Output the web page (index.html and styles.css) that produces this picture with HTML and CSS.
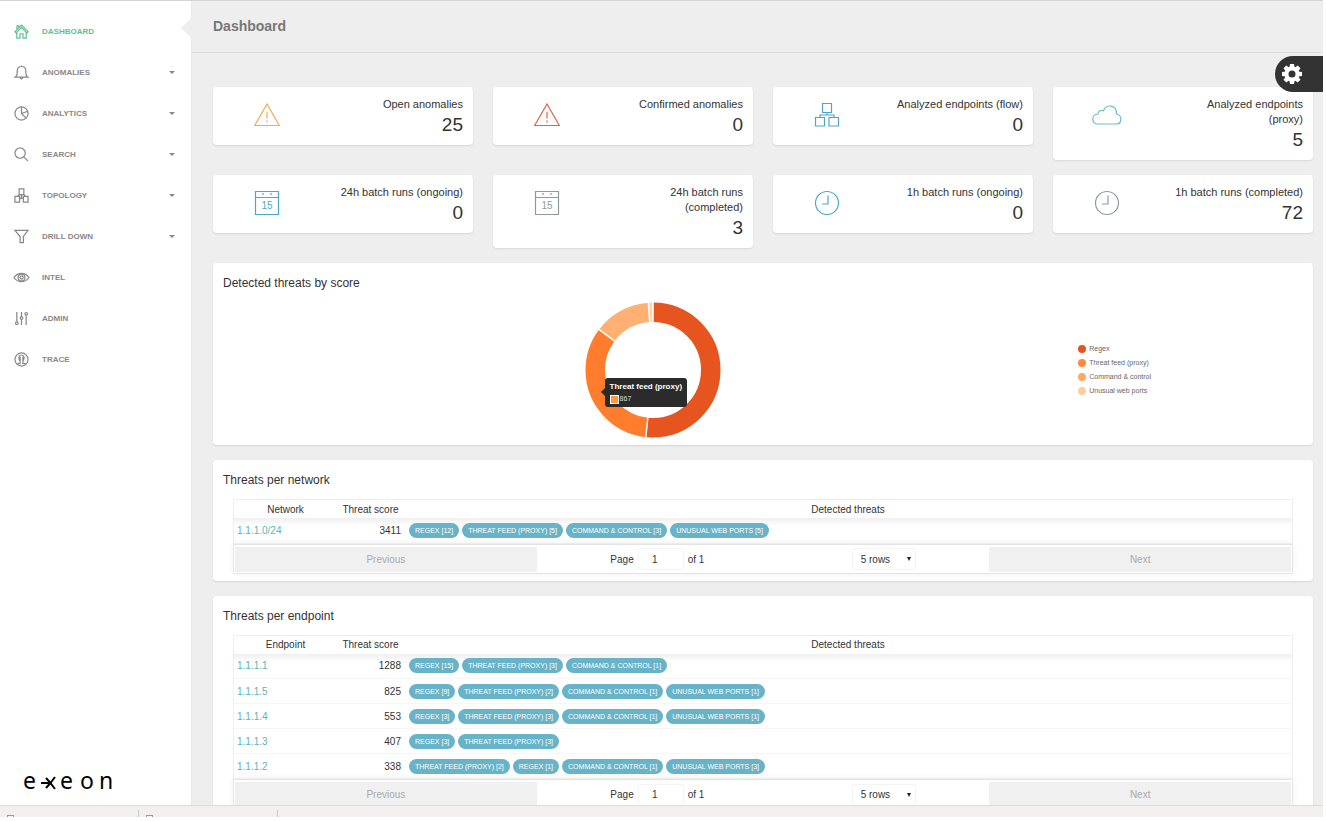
FILE: index.html
```html
<!DOCTYPE html>
<html lang="en">
<head>
    <meta charset="UTF-8">
    <meta name="viewport" content="width=device-width, initial-scale=1.0">
    <title>Dashboard</title>
    <link rel="stylesheet" href="styles.css">
</head>
<body>
    <div class="app">

        <!-- Sidebar -->
        <aside class="sidebar">
            <nav class="nav">
                <a class="nav-item active" href="#">
                    <svg class="nav-icon" viewBox="0 0 16 16"><path d="M1 8.2 8 1.2l7 7-1.2 1.2L8 3.7 2.2 9.4zM3 8.8V15h3.4v-4.6h3.2V15H13V8.8M3.2 5.8V2h2v2"/></svg>
                    <span>DASHBOARD</span>
                </a>
                <a class="nav-item" href="#">
                    <svg class="nav-icon" viewBox="0 0 16 16"><path d="M1.2 13c1.6-1 2.2-2.400 2.200-4.500V6.500C3.400 3.500 5.300 1.600 8 1.600s4.600 1.900 4.600 4.900v2c0 2.100.6 3.500 2.200 4.500zM6.600 13.200c0 2 2.800 2 2.800 0M8 .4v1.200"/></svg>
                    <span>ANOMALIES</span><i class="caret"></i>
                </a>
                <a class="nav-item" href="#">
                    <svg class="nav-icon" viewBox="0 0 16 16"><circle cx="8" cy="8" r="7"/><path d="M8 1v7l4.800 5M8 8l6.600-2.400"/></svg>
                    <span>ANALYTICS</span><i class="caret"></i>
                </a>
                <a class="nav-item" href="#">
                    <svg class="nav-icon" viewBox="0 0 16 16"><circle cx="6.500" cy="6.500" r="5.500"/><path d="M10.500 10.500 15 15"/></svg>
                    <span>SEARCH</span><i class="caret"></i>
                </a>
                <a class="nav-item" href="#">
                    <svg class="nav-icon" viewBox="0 0 16 16"><path d="M5.500 1h5v6h-5zM1 9h5v6H1zM10 9h5v6h-5zM8 7v4M3.500 9l2-2M12.500 9l-2-2M6 11h4"/></svg>
                    <span>TOPOLOGY</span><i class="caret"></i>
                </a>
                <a class="nav-item" href="#">
                    <svg class="nav-icon" viewBox="0 0 16 16"><path d="M1 1.500h14l-5 6.500v6.500H6.500V8z"/></svg>
                    <span>DRILL DOWN</span><i class="caret"></i>
                </a>
                <a class="nav-item" href="#">
                    <svg class="nav-icon" viewBox="0 0 16 16"><path d="M0 8c4-6 12-6 16 0-4 6-12 6-16 0z"/><circle cx="8" cy="8" r="3.700"/><circle cx="8" cy="8" r="1.700"/></svg>
                    <span>INTEL</span>
                </a>
                <a class="nav-item" href="#">
                    <svg class="nav-icon" viewBox="0 0 16 16"><path d="M3 1v10.500M8 1v5M8 9v6M13 4.500V15"/><circle cx="3" cy="13" r="1.400"/><circle cx="8" cy="7.500" r="1.400"/><circle cx="13" cy="3" r="1.400"/></svg>
                    <span>ADMIN</span>
                </a>
                <a class="nav-item" href="#">
                    <svg class="nav-icon" viewBox="0 0 16 16"><circle cx="8" cy="8" r="7"/><path d="M3.500 12.500h3V10C4.300 7 5 3.200 8 3.200S11.700 7 9.500 10v2.500h3M6.500 10V5M9.500 10V5"/></svg>
                    <span>TRACE</span>
                </a>
            </nav>
            <svg class="logo" viewBox="0 -8 92 34" role="img" aria-label="exeon">
                <g class="logo-text">
                    <text x="0" y="18">e</text>
                    <text x="37" y="18">e</text>
                    <text x="57" y="18">o</text>
                    <text x="76" y="18">n</text>
                </g>
                <path d="M18 12h9.500M23 7l4.500 5-4.500 5M32 6l-4.500 6 4.500 6"/>
            </svg>
        </aside>

        <!-- Main content -->
        <main class="main">
            <header class="topbar">
                <h1>Dashboard</h1>
            </header>

            <div class="content">
                <section class="stats">
                    <div class="card">
                        <svg class="stat-icon yellow" viewBox="0 0 26 26"><path d="M13 2 25.300 23.500H.7z"/><path d="M13 10v6.500M13 18.500v2"/></svg>
                        <div class="stat-text"><p>Open anomalies</p><strong>25</strong></div>
                    </div>
                    <div class="card">
                        <svg class="stat-icon red" viewBox="0 0 26 26"><path d="M13 2 25.300 23.500H.7z"/><path d="M13 10v6.500M13 18.500v2"/></svg>
                        <div class="stat-text"><p>Confirmed anomalies</p><strong>0</strong></div>
                    </div>
                    <div class="card">
                        <svg class="stat-icon blue" viewBox="0 0 26 26"><path d="M8.500 1.500h9v9h-9zM1.500 15.500h9v8.500h-9zM15 15.500h9.500v8.500H15zM13 10.500v2.500M6 15.500V13h14v2.500"/></svg>
                        <div class="stat-text"><p>Analyzed endpoints (flow)</p><strong>0</strong></div>
                    </div>
                    <div class="card">
                        <svg class="stat-icon cloud" viewBox="0 0 30 26"><defs><linearGradient id="sky" x1="0" y1="0" x2="0" y2="1"><stop offset="0" stop-color="#68c4ae"/><stop offset="0.500" stop-color="#76b8d6"/></linearGradient></defs><path stroke="url(#sky)" d="M6.500 22C-1 22-1 12.500 6 12c0-3 3-4.500 5.500-3.200C14 1.500 25 2.500 24.500 12 30.500 13 30 22 24.500 22z"/></svg>
                        <div class="stat-text"><p>Analyzed endpoints (proxy)</p><strong>5</strong></div>
                    </div>
                    <div class="card">
                        <svg class="stat-icon blue" viewBox="0 0 26 26"><path d="M1.500 1.500h23v23h-23zM1.500 7.500h23M9 3v2M17 3v2"/><text x="13" y="19">15</text></svg>
                        <div class="stat-text"><p>24h batch runs (ongoing)</p><strong>0</strong></div>
                    </div>
                    <div class="card">
                        <svg class="stat-icon gray" viewBox="0 0 26 26"><path d="M1.500 1.500h23v23h-23zM1.500 7.500h23M9 3v2M17 3v2"/><text x="13" y="19">15</text></svg>
                        <div class="stat-text"><p>24h batch runs (completed)</p><strong>3</strong></div>
                    </div>
                    <div class="card">
                        <svg class="stat-icon blue" viewBox="0 0 26 26"><circle cx="13" cy="13" r="11.500"/><path d="M14 5.500V14H8"/></svg>
                        <div class="stat-text"><p>1h batch runs (ongoing)</p><strong>0</strong></div>
                    </div>
                    <div class="card">
                        <svg class="stat-icon gray" viewBox="0 0 26 26"><circle cx="13" cy="13" r="11.500"/><path d="M14 5.500V14H8"/></svg>
                        <div class="stat-text"><p>1h batch runs (completed)</p><strong>72</strong></div>
                    </div>
                </section>

                <section class="panel">
                    <h2>Detected threats by score</h2>
                    <div class="chart">
                        <div class="chart-area">
                            <div class="donut">
                                <svg viewBox="0 0 136 136">
                                    <g fill="none" stroke-width="19.500" transform="rotate(-90 68 68)">
                                        <circle cx="68" cy="68" r="57.750" pathLength="360" stroke="#e65520" stroke-dasharray="186 174"/>
                                        <circle cx="68" cy="68" r="57.750" pathLength="360" stroke="#ff7d2c" stroke-dasharray="121 239" stroke-dashoffset="-186"/>
                                        <circle cx="68" cy="68" r="57.750" pathLength="360" stroke="#ffb072" stroke-dasharray="49 311" stroke-dashoffset="-307"/>
                                        <circle cx="68" cy="68" r="57.750" pathLength="360" stroke="#fdd3a8" stroke-dasharray="4 356" stroke-dashoffset="-356"/>
                                    </g>
                                    <path d="M68 0v21M60.700 136l2.200-21M13.600 27.200l17 12.600M63.300 0l1.500 21" stroke="#fff" stroke-width="1.500"/>
                                </svg>
                                <div class="tooltip">
                                    <b>Threat feed (proxy)</b>
                                    <div><i class="swatch"></i>867</div>
                                </div>
                            </div>
                        </div>
                        <ul class="legend">
                            <li><i class="dot regex"></i>Regex</li>
                            <li><i class="dot feed"></i>Threat feed (proxy)</li>
                            <li><i class="dot command"></i>Command &amp; control</li>
                            <li><i class="dot ports"></i>Unusual web ports</li>
                        </ul>
                    </div>
                </section>

                <section class="panel">
                    <h2>Threats per network</h2>
                    <div class="table-box">
                        <table>
                            <thead>
                                <tr><th class="col-name">Network</th><th class="col-score">Threat score</th><th>Detected threats</th></tr>
                            </thead>
                            <tbody>
                                <tr>
                                    <td><a href="#">1.1.1.0/24</a></td>
                                    <td class="score">3411</td>
                                    <td><div class="badges"><span>REGEX [12]</span><span>THREAT FEED (PROXY) [5]</span><span>COMMAND &amp; CONTROL [3]</span><span>UNUSUAL WEB PORTS [5]</span></div></td>
                                </tr>
                            </tbody>
                        </table>
                        <div class="pagination">
                            <button type="button" disabled>Previous</button>
                            <div class="pages">
                                <label class="page-info">Page <input type="text" value="1"> of 1</label>
                                <select aria-label="Rows per page"><option>5 rows</option><option>10 rows</option></select>
                            </div>
                            <button type="button" disabled>Next</button>
                        </div>
                    </div>
                </section>

                <section class="panel">
                    <h2>Threats per endpoint</h2>
                    <div class="table-box">
                        <table>
                            <thead>
                                <tr><th class="col-name">Endpoint</th><th class="col-score">Threat score</th><th>Detected threats</th></tr>
                            </thead>
                            <tbody>
                                <tr>
                                    <td><a href="#">1.1.1.1</a></td>
                                    <td class="score">1288</td>
                                    <td><div class="badges"><span>REGEX [15]</span><span>THREAT FEED (PROXY) [3]</span><span>COMMAND &amp; CONTROL [1]</span></div></td>
                                </tr>
                                <tr>
                                    <td><a href="#">1.1.1.5</a></td>
                                    <td class="score">825</td>
                                    <td><div class="badges"><span>REGEX [9]</span><span>THREAT FEED (PROXY) [2]</span><span>COMMAND &amp; CONTROL [1]</span><span>UNUSUAL WEB PORTS [1]</span></div></td>
                                </tr>
                                <tr>
                                    <td><a href="#">1.1.1.4</a></td>
                                    <td class="score">553</td>
                                    <td><div class="badges"><span>REGEX [3]</span><span>THREAT FEED (PROXY) [3]</span><span>COMMAND &amp; CONTROL [1]</span><span>UNUSUAL WEB PORTS [1]</span></div></td>
                                </tr>
                                <tr>
                                    <td><a href="#">1.1.1.3</a></td>
                                    <td class="score">407</td>
                                    <td><div class="badges"><span>REGEX [3]</span><span>THREAT FEED (PROXY) [3]</span></div></td>
                                </tr>
                                <tr>
                                    <td><a href="#">1.1.1.2</a></td>
                                    <td class="score">338</td>
                                    <td><div class="badges"><span>THREAT FEED (PROXY) [2]</span><span>REGEX [1]</span><span>COMMAND &amp; CONTROL [1]</span><span>UNUSUAL WEB PORTS [3]</span></div></td>
                                </tr>
                            </tbody>
                        </table>
                        <div class="pagination">
                            <button type="button" disabled>Previous</button>
                            <div class="pages">
                                <label class="page-info">Page <input type="text" value="1"> of 1</label>
                                <select aria-label="Rows per page"><option>5 rows</option><option>10 rows</option></select>
                            </div>
                            <button type="button" disabled>Next</button>
                        </div>
                    </div>
                </section>
            </div>
        </main>

        <button class="settings" type="button" aria-label="Settings">
            <svg viewBox="0 0 20 20"><g fill="#fff"><path id="tooth" d="M8 0h4l.6 4H7.400zM8 20h4l.6-4H7.400z"/><use href="#tooth" transform="rotate(45 10 10)"/><use href="#tooth" transform="rotate(90 10 10)"/><use href="#tooth" transform="rotate(135 10 10)"/></g><circle cx="10" cy="10" r="5.500" fill="none" stroke="#fff" stroke-width="4"/></svg>
        </button>
    </div>

    <!-- Downloads bar -->
    <footer class="downloads">
        <div class="download"><i></i></div>
        <div class="download"><i></i></div>
    </footer>
</body>
</html>
```
FILE: styles.css
```css
* {
    box-sizing: border-box;
}

html {
    background: #fff;
}

body {
    margin: 0;
    height: 100vh;
    padding: 0 3px 4px 0;
    display: flex;
    flex-direction: column;
    overflow: hidden;
    color: #333;
    font-family: "Liberation Sans", Arial, sans-serif;
    font-size: 10px;
}

h1, h2, p, ul {
    margin: 0;
    padding: 0;
}

a {
    color: #5bb5b5;
    text-decoration: none;
}

.app {
    flex: 1;
    min-height: 0;
    display: flex;
    position: relative;
    border-top: 1px solid #d4d4d4;
    background: #eee;
}

/* Sidebar */

.sidebar {
    width: 192px;
    flex: none;
    display: flex;
    flex-direction: column;
    justify-content: space-between;
    padding: 10px 0 8px;
    background: #fff;
    border-right: 1px solid #e8e8e8;
}

.nav-item {
    display: flex;
    align-items: center;
    height: 41px;
    padding: 0 16px 0 14px;
    gap: 13px;
    color: #888;
    font-size: 8px;
    font-weight: bold;
}

.nav-item.active {
    color: #62bf8f;
}

.nav-icon {
    width: 15px;
    height: 15px;
    fill: none;
    stroke: currentColor;
    stroke-width: 1.3;
    overflow: visible;
}

.caret {
    margin-left: auto;
    border: 3px solid transparent;
    border-top-color: #888;
    border-bottom: 0;
}

.logo {
    width: 92px;
    height: 34px;
    margin-left: 23px;
}

.logo path {
    fill: none;
    stroke: #000;
    stroke-width: 2;
}

.logo-text {
    font-family: "Noto Sans", sans-serif;
    font-size: 23px;
}

/* Main */

.main {
    flex: 1;
    min-width: 0;
    overflow: hidden;
}

.topbar {
    height: 52px;
    display: flex;
    align-items: center;
    padding: 0 0 2px 21px;
    border-bottom: 1px solid #dcdcdc;
}

/* notch that points at the active menu entry */
.topbar::before {
    content: "";
    position: absolute;
    left: 181px;
    top: 16px;
    border: 11px solid transparent;
    border-right-color: #eee;
    border-left: 0;
}

.topbar h1 {
    font-size: 14px;
    color: #777;
}

.content {
    display: flex;
    flex-direction: column;
    gap: 15px;
    padding: 34px 10px 15px 21px;
}

.stats {
    display: grid;
    grid-template-columns: repeat(4, 1fr);
    align-items: start;
    gap: 15px 20px;
}

.card, .panel {
    background: #fff;
    border-radius: 4px;
    box-shadow: 0 1px 2px rgba(0, 0, 0, 0.1);
}

.card {
    display: grid;
    grid-template-columns: 5fr 7fr;
    padding-bottom: 7px;
}

.stat-icon {
    width: 26px;
    height: 26px;
    margin-top: 15px;
    justify-self: center;
    fill: none;
    stroke: currentColor;
    stroke-width: 1.2;
}

.stat-icon text {
    fill: currentColor;
    stroke: none;
    font-size: 10px;
    text-anchor: middle;
}

.stat-icon.cloud {
    width: 30px;
}

.yellow {
    color: #f0ad4e;
}

.red {
    color: #e2633f;
}

.blue {
    color: #4ba8c6;
}

.gray {
    color: #8f9a9a;
}

.stat-text {
    padding: 10px 10px 0 12px;
    text-align: right;
    font-size: 11px;
    line-height: 15px;
}

.stat-text strong {
    display: block;
    font-size: 19px;
    font-weight: normal;
    line-height: 26px;
}

.panel {
    padding: 10px 10px 7px;
}

.panel h2 {
    margin-bottom: 9px;
    font-size: 12px;
    font-weight: normal;
    line-height: 20px;
}

/* Chart */

.chart {
    display: grid;
    grid-template-columns: 79fr 21fr;
    align-items: center;
}

.chart-area {
    display: flex;
    justify-content: center;
    padding-left: 6px;
}

.donut {
    position: relative;
    width: 136px;
    height: 136px;
}

.donut svg {
    display: block;
}

.tooltip {
    position: absolute;
    left: 20px;
    top: 76px;
    padding: 3px 5px 2px;
    border-radius: 3px;
    background: #2b2b2b;
    color: #ddd;
    font-size: 7px;
    line-height: 12px;
    white-space: nowrap;
}

.tooltip::before {
    content: "";
    position: absolute;
    left: -4px;
    top: 10px;
    border: 4px solid transparent;
    border-right-color: #2b2b2b;
    border-left: 0;
}

.tooltip b {
    display: block;
    color: #fff;
    font-size: 8px;
}

.tooltip div {
    display: flex;
    align-items: center;
    gap: 1px;
}

.swatch {
    width: 9px;
    height: 9px;
    border: 1px solid #fff;
    background: #ff9845;
}

.legend {
    padding-left: 2px;
    list-style: none;
    color: #666;
    font-size: 7px;
    line-height: 14px;
}

.legend li {
    display: flex;
    align-items: center;
    gap: 3px;
}

.dot {
    width: 8px;
    height: 8px;
    border-radius: 50%;
}

.dot.regex {
    background: #e65520;
}

.dot.feed {
    background: #ff8c3c;
}

.dot.command {
    background: #ffaa66;
}

.dot.ports {
    background: #fdcf9f;
}

/* Tables */

.table-box {
    margin: 0 10px;
    border: 1px solid #eee;
}

table {
    width: 100%;
    table-layout: fixed;
    border-collapse: collapse;
}

th {
    height: 18px;
    padding: 0;
    font-weight: normal;
}

.col-name {
    width: 103px;
}

.col-score {
    width: 67px;
}

td {
    height: 25px;
    padding: 0 3px;
    border-bottom: 1px solid #f6f6f6;
}

tbody tr:first-child {
    background: linear-gradient(#efefef, #fff 8px);
}

.score {
    text-align: right;
}

.badges {
    display: flex;
    gap: 3px;
    padding-left: 2px;
}

.badges span {
    padding: 0 6px;
    border-radius: 8px;
    background: #68b3c8;
    color: #fff;
    font-size: 7px;
    line-height: 15px;
    white-space: nowrap;
}

.pagination {
    display: flex;
    padding: 2px 1px 1px;
    border-top: 1px solid #e4e4e4;
    box-shadow: 0 0 8px rgba(0, 0, 0, 0.08);
}

.pagination button {
    flex: 2;
    height: 25px;
    padding: 0;
    border: 0;
    background: #f0f0f0;
    color: #aaa;
    font: inherit;
}

.pages {
    flex: 3;
    display: flex;
    align-items: center;
    justify-content: space-around;
}

.page-info {
    display: flex;
    align-items: center;
    gap: 4px;
}

.page-info input, .pages select {
    height: 22px;
    border: 1px solid #f4f4f4;
    border-radius: 3px;
    background: #fff;
    color: #333;
    font: inherit;
}

.page-info input {
    width: 46px;
    padding: 0 12px 0 0;
    text-align: center;
}

.pages select {
    width: 64px;
    padding: 0 8px;
    appearance: none;
    background: #fff url("data:image/svg+xml,%3Csvg xmlns='http://www.w3.org/2000/svg' viewBox='0 0 4 4'%3E%3Cpath d='M0 0h4L2 4z' fill='%23222'/%3E%3C/svg%3E") no-repeat right 4px center / 4px 4px;
}

/* Settings tab */

.settings {
    position: absolute;
    right: 0;
    top: 55px;
    width: 48px;
    height: 36px;
    padding: 0 0 0 7px;
    border: 0;
    border-radius: 18px 0 0 18px;
    background: #333;
}

.settings svg {
    display: block;
    width: 20px;
    height: 20px;
}

/* Downloads bar */

.downloads {
    display: flex;
    flex: none;
    height: 12px;
    overflow: hidden;
    border-top: 1px solid #dedcda;
    background: #f1f0ee;
}

.download {
    width: 139px;
    margin-top: 4px;
    padding: 5px 0 0 7px;
    border-right: 1px solid #ccc;
}

.download i {
    display: block;
    width: 7px;
    height: 9px;
    border: 1px solid #999;
}
```
